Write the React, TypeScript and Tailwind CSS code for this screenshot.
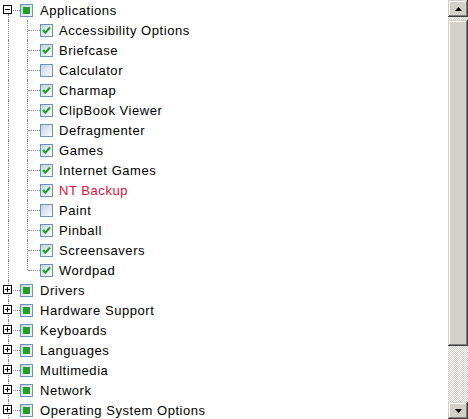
import React from 'react';

type Kind = 'checked' | 'unchecked' | 'partial';

const Box = ({ kind }: { kind: Kind }) => (
  <svg width="13" height="13" viewBox="0 0 13 13" className="shrink-0">
    <defs>
      <linearGradient id={`g-${kind}`} x1="0" y1="0" x2="1" y2="1">
        <stop offset="0" stopColor="#c2d0e0" />
        <stop offset="1" stopColor="#ffffff" />
      </linearGradient>
    </defs>
    <rect x="0.5" y="0.5" width="12" height="12" fill={`url(#g-${kind})`} stroke="#6b92b8" />
    {kind === 'checked' && (
      <path d="M3 6 L5.3 8.7 L10 3.5" fill="none" stroke="#21a121" strokeWidth="2.2" />
    )}
    {kind === 'partial' && <rect x="3" y="3" width="7" height="7" fill="#21a121" />}
  </svg>
);

const Expander = ({ open }: { open: boolean }) => (
  <span className="absolute left-[3px] top-[5px] flex h-[9px] w-[9px] items-center justify-center border border-[#000] bg-white">
    <span className="absolute h-px w-[5px] bg-black" />
    {!open && <span className="absolute h-[5px] w-px bg-black" />}
  </span>
);

const TopRow = ({ label, open = false, first = false }: { label: string; open?: boolean; first?: boolean }) => (
  <div className="flex h-5 items-center">
    <div className="relative h-5 w-[20px] shrink-0">
      <span
        className={`absolute left-[8px] ${first ? 'top-[14px]' : 'top-0'} bottom-0 border-l border-dotted border-[#808080]`}
      />
      <span className="absolute left-[13px] top-[10px] w-[7px] border-t border-dotted border-[#808080]" />
      <Expander open={open} />
    </div>
    <Box kind="partial" />
    <span className="ml-[7px] pt-[2px] whitespace-nowrap">{label}</span>
  </div>
);

const ChildRow = ({ label, kind, last = false, red = false }: { label: string; kind: Kind; last?: boolean; red?: boolean }) => (
  <div className="flex h-5 items-center">
    <div className="relative h-5 w-[20px] shrink-0">
      <span className="absolute left-[8px] top-0 bottom-0 border-l border-dotted border-[#808080]" />
    </div>
    <div className="relative h-5 w-[20px] shrink-0">
      <span
        className={`absolute left-[7px] top-0 ${last ? 'h-[10px]' : 'bottom-0'} border-l border-dotted border-[#808080]`}
      />
      <span className="absolute left-[8px] top-[10px] w-[12px] border-t border-dotted border-[#808080]" />
    </div>
    <Box kind={kind} />
    <span className={`ml-[6px] pt-[2px] whitespace-nowrap ${red ? 'text-[#e0103c]' : ''}`}>{label}</span>
  </div>
);

const children: { label: string; kind: Kind; red?: boolean }[] = [
  { label: 'Accessibility Options', kind: 'checked' },
  { label: 'Briefcase', kind: 'checked' },
  { label: 'Calculator', kind: 'unchecked' },
  { label: 'Charmap', kind: 'checked' },
  { label: 'ClipBook Viewer', kind: 'checked' },
  { label: 'Defragmenter', kind: 'unchecked' },
  { label: 'Games', kind: 'checked' },
  { label: 'Internet Games', kind: 'checked' },
  { label: 'NT Backup', kind: 'checked', red: true },
  { label: 'Paint', kind: 'unchecked' },
  { label: 'Pinball', kind: 'checked' },
  { label: 'Screensavers', kind: 'checked' },
  { label: 'Wordpad', kind: 'checked' },
];

const groups = [
  'Drivers',
  'Hardware Support',
  'Keyboards',
  'Languages',
  'Multimedia',
  'Network',
  'Operating System Options',
];

const bevel =
  'bg-[#d4d0c8] shadow-[inset_-1px_-1px_#404040,inset_1px_1px_#d4d0c8,inset_-2px_-2px_#808080,inset_2px_2px_#ffffff]';
const checker = 'bg-[repeating-conic-gradient(#d4d0c8_0_25%,#ffffff_0_50%)] bg-[length:2px_2px]';

export default function App() {
  return (
    <div className="flex h-[419px] w-[468px] overflow-hidden bg-white font-['Liberation_Sans',sans-serif] text-[13px] tracking-[0.55px] text-black">
      <div className="flex-1 overflow-hidden">
        <TopRow label="Applications" open first />
        {children.map((c, i) => (
          <ChildRow key={c.label} label={c.label} kind={c.kind} red={c.red} last={i === children.length - 1} />
        ))}
        {groups.map((g) => (
          <TopRow key={g} label={g} />
        ))}
      </div>
      <div className="flex w-5 shrink-0 flex-col">
        <div className={`flex h-[17px] shrink-0 items-center justify-center ${bevel}`}>
          <svg width="7" height="4" viewBox="0 0 7 4">
            <path d="M3.5 0 L7 4 L0 4 Z" fill="#000" />
          </svg>
        </div>
        <div className={`h-[3px] shrink-0 ${checker}`} />
        <div className={`h-[326px] shrink-0 ${bevel}`} />
        <div className={`flex-1 ${checker}`} />
        <div className={`flex h-[17px] shrink-0 items-center justify-center ${bevel}`}>
          <svg width="7" height="4" viewBox="0 0 7 4">
            <path d="M0 0 L7 0 L3.5 4 Z" fill="#000" />
          </svg>
        </div>
      </div>
    </div>
  );
}
